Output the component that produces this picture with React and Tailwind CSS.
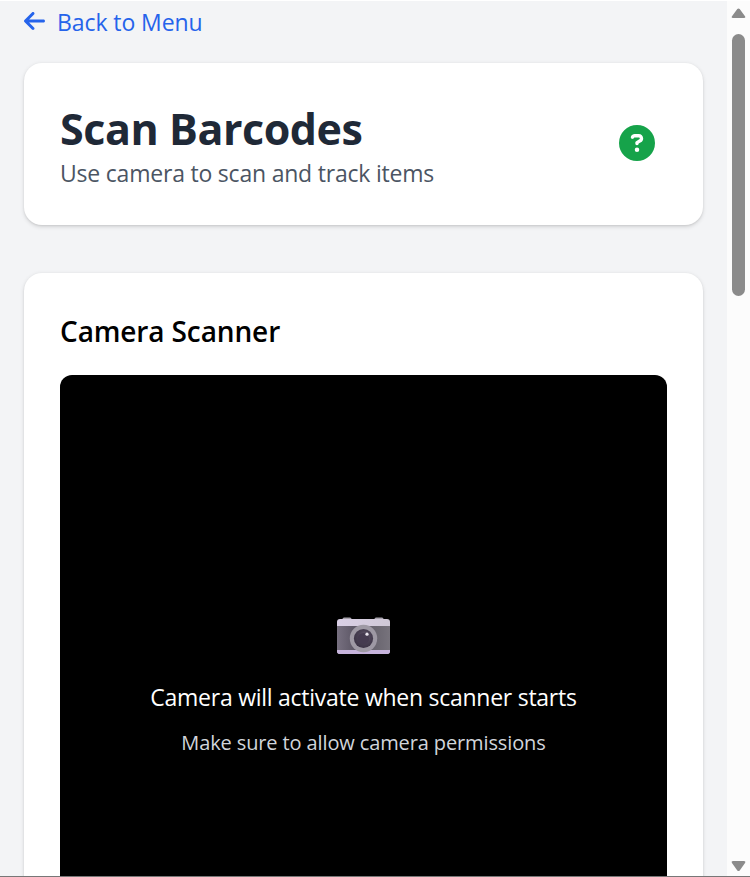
import React from 'react';
import { FaArrowLeft, FaCircleQuestion } from 'react-icons/fa6';

function CameraIcon() {
  return (
    <svg width="53" height="38" viewBox="0.5 0 53 38" aria-label="Camera">
      <defs>
        <linearGradient id="cameraTop" x1="0" y1="0" x2="1" y2="0">
          <stop offset="0" stopColor="#dad0e6" />
          <stop offset="1" stopColor="#cfc8d6" />
        </linearGradient>
        <linearGradient id="cameraGrip" x1="0" y1="0" x2="1" y2="0">
          <stop offset="0" stopColor="#777080" />
          <stop offset="0.3" stopColor="#5f5968" />
          <stop offset="0.75" stopColor="#6b6771" />
          <stop offset="1" stopColor="#77737c" />
        </linearGradient>
        <radialGradient id="cameraLens" cx="0.55" cy="0.4" r="0.6">
          <stop offset="0" stopColor="#6b6275" />
          <stop offset="0.5" stopColor="#4b4255" />
          <stop offset="1" stopColor="#3b3345" />
        </radialGradient>
      </defs>
      <rect x="6" y="0.5" width="9" height="4" rx="1.5" fill="#a8a3ad" />
      <rect x="38" y="0.5" width="9" height="4" rx="1.5" fill="#a8a3ad" />
      <rect x="0.5" y="2" width="53" height="35" rx="3" fill="url(#cameraTop)" />
      <rect x="0.5" y="9" width="53" height="24" fill="url(#cameraGrip)" />
      <path d="M0.5 33h53v1a3 3 0 0 1-3 3h-47a3 3 0 0 1-3-3z" fill="#c6b3dc" />
      <circle cx="27" cy="21.5" r="13.7" fill="#9e99a4" />
      <circle cx="27" cy="21.5" r="9.6" fill="url(#cameraLens)" />
      <circle cx="27" cy="21.5" r="5.6" fill="#453b50" />
      <circle cx="30.5" cy="17.2" r="1.6" fill="#e9e5ee" />
    </svg>
  );
}

function Scrollbar() {
  return (
    <div className="flex w-[23px] shrink-0 flex-col items-center bg-[#fcfcfc]">
      <svg width="15" height="11" viewBox="0 0 15 11" className="mt-[7px] shrink-0">
        <path d="M6.3 1.1 1 8.2Q0 10 2 10h11q2 0 1-1.8L8.7 1.1q-1.2-1.2-2.4 0z" fill="#8b8b8b" />
      </svg>
      <div className="mt-[15px] h-[262px] w-[13px] shrink-0 rounded-full bg-[#8b8b8b]" />
      <svg width="15" height="12" viewBox="0 0 15 12" className="mt-auto mb-[4px] shrink-0">
        <path d="M6.3 10.4 0.8 2.8Q0 1 2 1h11q2 0 1.2 1.8L8.7 10.4q-1.2 1.2-2.4 0z" fill="#8b8b8b" />
      </svg>
    </div>
  );
}

function App() {
  return (
    <div className="flex h-[877px] w-[750px] overflow-hidden border-t border-t-white border-b border-b-[#777777] bg-[#f3f4f6] font-['Open_Sans','Noto_Sans',sans-serif] whitespace-nowrap">
      <main className="min-w-0 flex-1 overflow-hidden px-6">
        <a href="#" className="mt-[2px] flex h-9 items-center text-[#2563eb]">
          <FaArrowLeft className="mr-3 h-6 w-[21px]" />
          <span className="pt-[2px] text-[23px] leading-9 tracking-[-0.08px]">Back to Menu</span>
        </a>

        <div className="mt-6 flex h-[162px] items-center justify-between rounded-[18px] bg-white px-9 shadow-[0_1.5px_4px_rgba(0,0,0,0.12),0_1px_2px_rgba(0,0,0,0.08)]">
          <div className="pt-1">
            <h1 className="text-[43px] leading-[54px] font-bold tracking-[-0.45px] text-[#1f2937]">
              Scan Barcodes
            </h1>
            <p className="-mt-px text-[23px] leading-9 tracking-[-0.21px] text-[#4b5563]">
              Use camera to scan and track items
            </p>
          </div>
          <button className="mr-3 mb-0.5 text-[#16a34a]">
            <FaCircleQuestion className="size-9" />
          </button>
        </div>

        <div className="mt-12 h-[800px] rounded-[18px] bg-white px-9 pt-[37px] shadow-[0_1.5px_4px_rgba(0,0,0,0.12),0_1px_2px_rgba(0,0,0,0.08)]">
          <h2 className="text-[28px] leading-[42px] font-semibold tracking-[-0.12px] text-black">
            Camera Scanner
          </h2>

          {/* Camera preview */}
          <div className="mt-[23px] flex h-[620px] flex-col items-center rounded-xl bg-black pt-[242px]">
            <CameraIcon />
            <p className="mt-[24px] text-[23px] leading-9 tracking-[-0.26px] text-white">
              Camera will activate when scanner starts
            </p>
            <p className="mt-[13px] text-[20px] leading-[30px] tracking-[-0.12px] text-[#d1d5db]">
              Make sure to allow camera permissions
            </p>
          </div>
        </div>
      </main>
      <Scrollbar />
    </div>
  );
}

export default App;
